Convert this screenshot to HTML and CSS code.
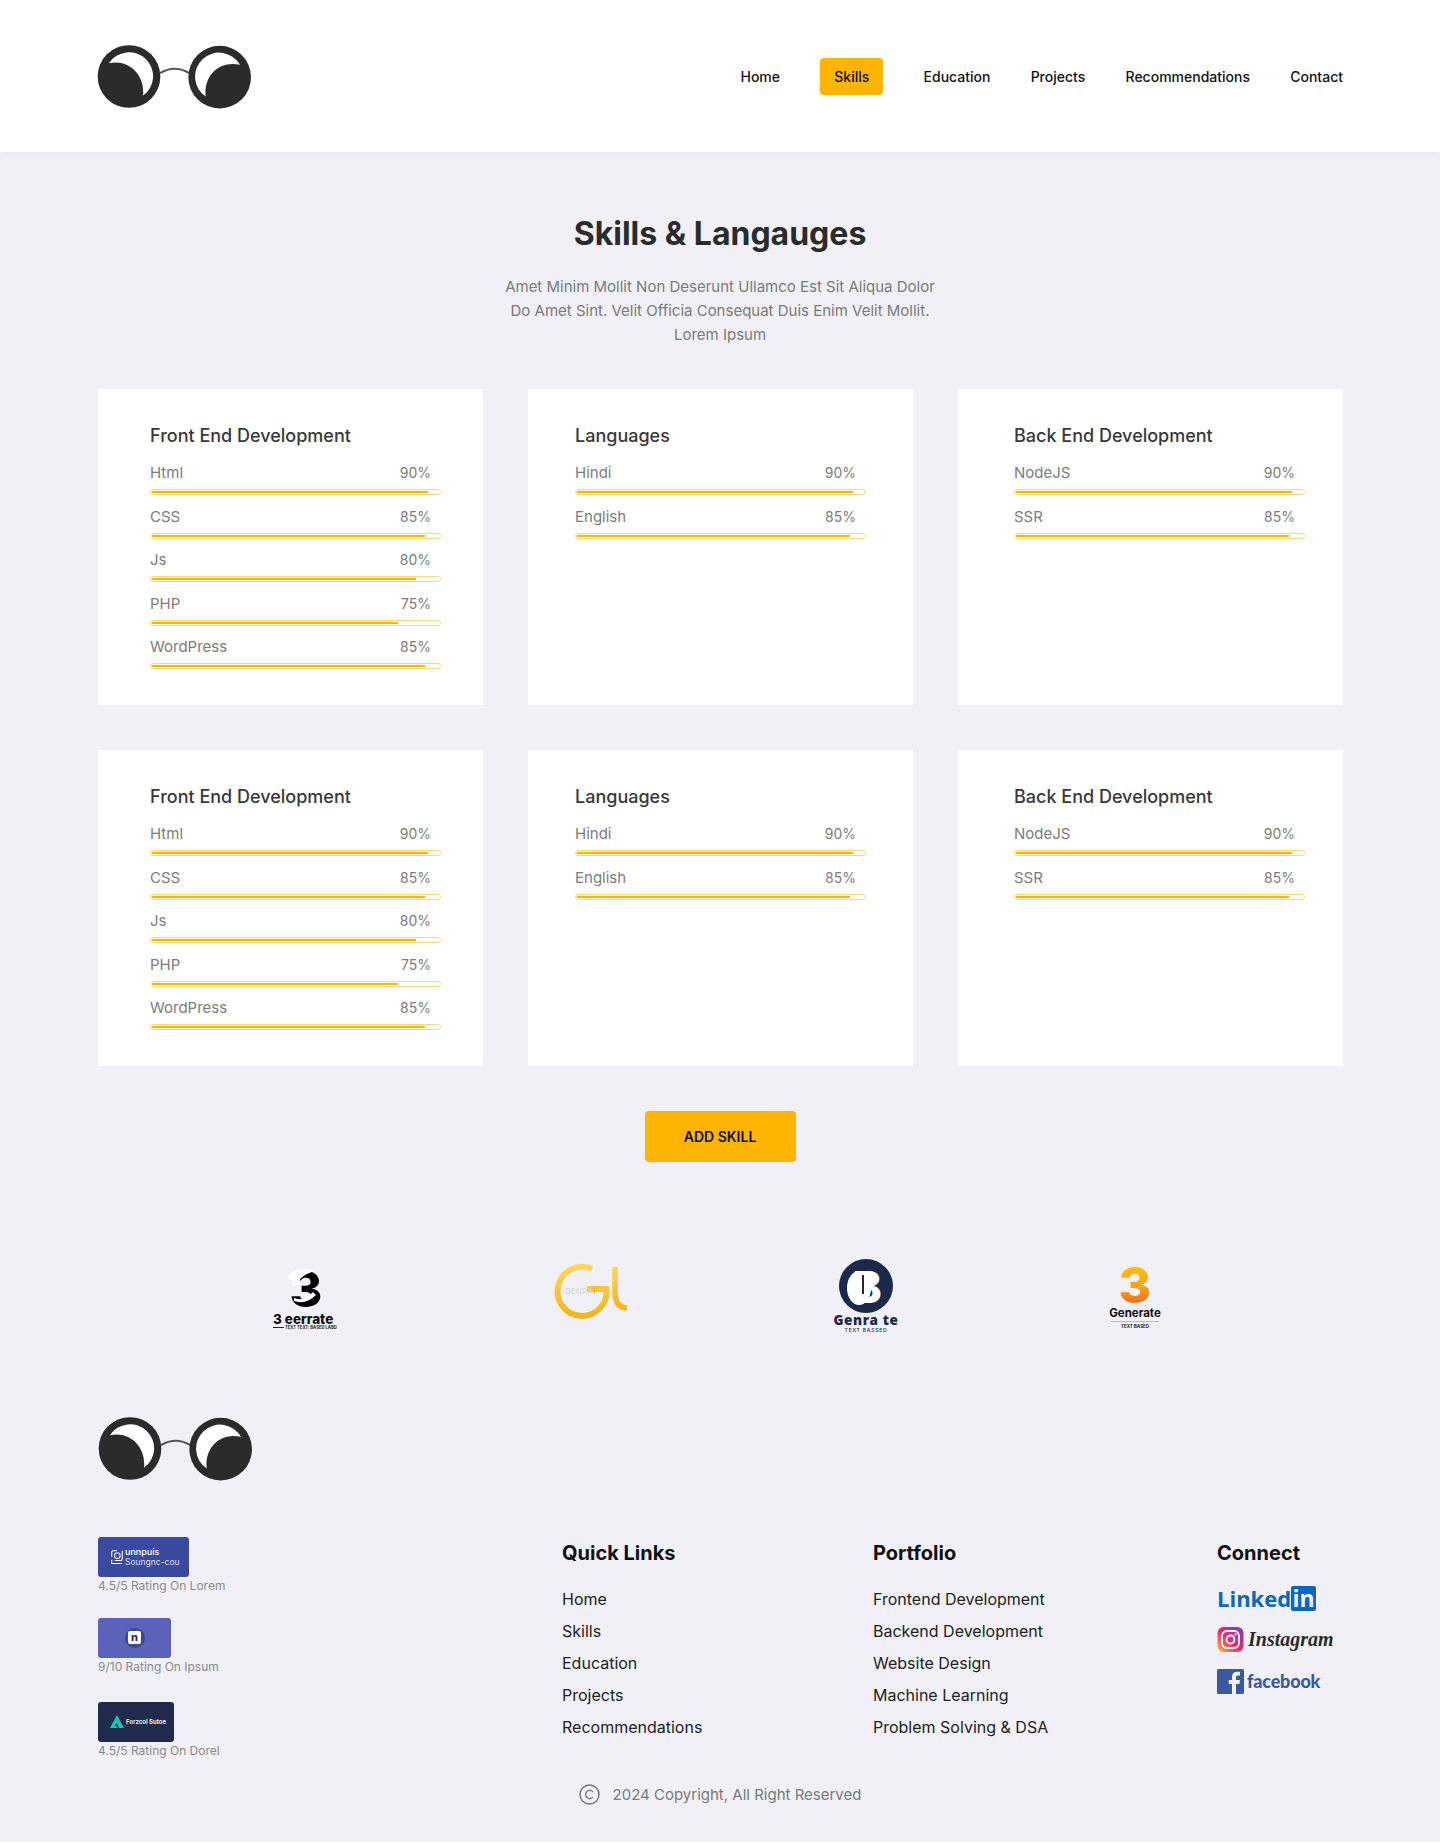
FILE: index.html
```html
<!DOCTYPE html>
<html lang="en">
<head>
<meta charset="utf-8">
<title>Skills &amp; Langauges</title>
<link rel="stylesheet" href="styles.css">
</head>
<body>
<svg class="defs" width="0" height="0" aria-hidden="true">
  <defs>
    <symbol id="glasses" viewBox="100 65 480 200">
      <path d="M298 155Q342 128 386 155" fill="none" stroke="#555" stroke-width="6"/>
      <circle cx="205" cy="165" r="94" fill="#2b2b2b"/>
      <circle cx="477" cy="167" r="94" fill="#2b2b2b"/>
      <path d="M145 125A72 72 0 1 1 247 223C254 160 205 112 145 125Z" fill="#fff"/>
      <path d="M538 130A72 72 0 1 0 435 225C428 160 478 116 538 130Z" fill="#fff"/>
    </symbol>
    <linearGradient id="gold" x1="0" y1="0" x2="0" y2="1">
      <stop offset="0" stop-color="#fdd65a"/><stop offset="1" stop-color="#f2b51c"/>
    </linearGradient>
    <linearGradient id="fire" x1="0" y1="0" x2="0" y2="1">
      <stop offset="0" stop-color="#ffd400"/><stop offset="0.55" stop-color="#f6a01a"/><stop offset="1" stop-color="#e44d20"/>
    </linearGradient>
    <linearGradient id="insta" x1="0" y1="1" x2="1" y2="0">
      <stop offset="0" stop-color="#fdc23e"/><stop offset="0.45" stop-color="#ee2a6b"/><stop offset="1" stop-color="#6a3fc8"/>
    </linearGradient>
  </defs>
</svg>

<header class="site-header">
  <svg class="logo" width="160" height="67"><use href="#glasses"/></svg>
  <nav class="nav">
    <a class="nav-link">Home</a>
    <a class="nav-link nav-link-active">Skills</a>
    <a class="nav-link">Education</a>
    <a class="nav-link">Projects</a>
    <a class="nav-link">Recommendations</a>
    <a class="nav-link">Contact</a>
  </nav>
</header>

<main class="main">
  <h1 class="title">Skills &amp; Langauges</h1>
  <p class="intro">Amet Minim Mollit Non Deserunt Ullamco Est Sit Aliqua Dolor Do Amet Sint. Velit Officia Consequat Duis Enim Velit Mollit. Lorem Ipsum</p>

  <section class="card-grid">
    <article class="card card-a">
      <h2 class="card-title">Front End Development</h2>
      <div class="skill"><div class="skill-row"><span>Html</span><span class="pct">90%</span></div><div class="bar"><div class="fill" style="width:96%"></div></div></div>
      <div class="skill"><div class="skill-row"><span>CSS</span><span class="pct">85%</span></div><div class="bar"><div class="fill" style="width:95%"></div></div></div>
      <div class="skill"><div class="skill-row"><span>Js</span><span class="pct">80%</span></div><div class="bar"><div class="fill" style="width:92%"></div></div></div>
      <div class="skill"><div class="skill-row"><span>PHP</span><span class="pct">75%</span></div><div class="bar"><div class="fill" style="width:85.6%"></div></div></div>
      <div class="skill"><div class="skill-row"><span>WordPress</span><span class="pct">85%</span></div><div class="bar"><div class="fill" style="width:95%"></div></div></div>
    </article>
    <article class="card card-b">
      <h2 class="card-title">Languages</h2>
      <div class="skill"><div class="skill-row"><span>Hindi</span><span class="pct">90%</span></div><div class="bar"><div class="fill" style="width:96%"></div></div></div>
      <div class="skill"><div class="skill-row"><span>English</span><span class="pct">85%</span></div><div class="bar"><div class="fill" style="width:95%"></div></div></div>
    </article>
    <article class="card card-c">
      <h2 class="card-title">Back End Development</h2>
      <div class="skill"><div class="skill-row"><span>NodeJS</span><span class="pct">90%</span></div><div class="bar"><div class="fill" style="width:96%"></div></div></div>
      <div class="skill"><div class="skill-row"><span>SSR</span><span class="pct">85%</span></div><div class="bar"><div class="fill" style="width:95%"></div></div></div>
    </article>
    <article class="card card-a">
      <h2 class="card-title">Front End Development</h2>
      <div class="skill"><div class="skill-row"><span>Html</span><span class="pct">90%</span></div><div class="bar"><div class="fill" style="width:96%"></div></div></div>
      <div class="skill"><div class="skill-row"><span>CSS</span><span class="pct">85%</span></div><div class="bar"><div class="fill" style="width:95%"></div></div></div>
      <div class="skill"><div class="skill-row"><span>Js</span><span class="pct">80%</span></div><div class="bar"><div class="fill" style="width:92%"></div></div></div>
      <div class="skill"><div class="skill-row"><span>PHP</span><span class="pct">75%</span></div><div class="bar"><div class="fill" style="width:85.6%"></div></div></div>
      <div class="skill"><div class="skill-row"><span>WordPress</span><span class="pct">85%</span></div><div class="bar"><div class="fill" style="width:95%"></div></div></div>
    </article>
    <article class="card card-b">
      <h2 class="card-title">Languages</h2>
      <div class="skill"><div class="skill-row"><span>Hindi</span><span class="pct">90%</span></div><div class="bar"><div class="fill" style="width:96%"></div></div></div>
      <div class="skill"><div class="skill-row"><span>English</span><span class="pct">85%</span></div><div class="bar"><div class="fill" style="width:95%"></div></div></div>
    </article>
    <article class="card card-c">
      <h2 class="card-title">Back End Development</h2>
      <div class="skill"><div class="skill-row"><span>NodeJS</span><span class="pct">90%</span></div><div class="bar"><div class="fill" style="width:96%"></div></div></div>
      <div class="skill"><div class="skill-row"><span>SSR</span><span class="pct">85%</span></div><div class="bar"><div class="fill" style="width:95%"></div></div></div>
    </article>
  </section>

  <div class="action"><button class="add-btn" type="button">ADD SKILL</button></div>

  <section class="brands">
    <svg class="brand" width="100" height="82" viewBox="0 -10 100 82">
      <text class="b1-mark" x="50" y="42" text-anchor="middle">3</text>
      <path d="M35 8Q46 1 60 6Q50 8 44 14Q44 18 50 19L36 21Q38 14 32 13Q33 10 35 8Z" fill="#fff"/>
      <path d="M38 33Q48 37 57 27L60 30Q50 40 38 36Z" fill="#fff"/>
      <text class="b1-name" x="17" y="59">3 eerrate</text>
      <rect x="17" y="62" width="11" height="1" fill="#222"/>
      <text class="b1-sub" x="29" y="64">TEXT TEXT: BASED LABD</text>
    </svg>
    <svg class="brand" width="88" height="82" viewBox="0 -10 88 82">
      <path d="M46 4A24.500 24.500 0 1 0 60.500 24H41" fill="none" stroke="url(#gold)" stroke-width="6"/>
      <path d="M69 2V26Q69 43 81 43" fill="none" stroke="url(#gold)" stroke-width="5.500"/>
      <text class="b2-text" x="19" y="29">GENRA<tspan class="b2-t">T</tspan></text>
    </svg>
    <svg class="brand" width="84" height="82" viewBox="0 -10 84 82">
      <circle cx="42" cy="21" r="27" fill="#1b294b"/>
      <ellipse cx="35" cy="23" rx="12" ry="17" fill="#fff"/>
      <ellipse cx="46" cy="14" rx="7" ry="7" fill="#fff"/>
      <text class="b3-mark" x="43" y="38" text-anchor="middle">B</text>
      <path d="M39 10V29" stroke="#1b294b" stroke-width="2" fill="none"/>
      <text class="b3-name" x="42" y="60" text-anchor="middle">Genra te</text>
      <text class="b3-sub" x="42" y="67" text-anchor="middle">TEXT BASSED</text>
    </svg>
    <svg class="brand" width="74" height="82" viewBox="0 -10 74 82">
      <text class="b4-mark" x="37" y="38" text-anchor="middle" fill="url(#fire)">3</text>
      <text class="b4-name" x="37" y="52" text-anchor="middle">Generate</text>
      <rect x="13" y="56" width="48" height="1" fill="#bbb"/>
      <text class="b4-sub" x="37" y="63" text-anchor="middle">TEXT BASED</text>
    </svg>
  </section>

  <footer class="footer">
    <svg class="logo footer-logo" width="160" height="67"><use href="#glasses"/></svg>
    <div class="footer-cols">
      <div class="ratings">
        <div class="rating">
          <div class="badge badge-one">
            <svg class="badge-icon" width="12" height="17" viewBox="0 0 16 20"><path d="M8 1H3a2 2 0 0 0-2 2v6M15 1v11a2 2 0 0 1-2 2H5M1 13v5h14" fill="none" stroke="#fff" stroke-width="1.400"/><rect x="5" y="4" width="7" height="7" rx="2" fill="none" stroke="#fff" stroke-width="1.400"/></svg>
            <div class="badge-words"><span class="badge-strong">unnpuis</span><span class="badge-light">Soungnc-cou</span></div>
          </div>
          <p class="rating-text">4.5/5 Rating On Lorem</p>
        </div>
        <div class="rating">
          <div class="badge badge-two"><span class="badge-dot"><span class="badge-n">n</span></span></div>
          <p class="rating-text">9/10 Rating On Ipsum</p>
        </div>
        <div class="rating">
          <div class="badge badge-three">
            <svg width="14" height="14" viewBox="0 0 14 14"><path d="M7 0L14 13H9L7 8L5 10L8 13H0Z" fill="#18c6b3"/></svg>
            <span class="badge-tiny">Forzcol Sutoe</span>
          </div>
          <p class="rating-text">4.5/5 Rating On Dorel</p>
        </div>
      </div>
      <div class="link-col col-quick">
        <h3 class="col-title">Quick Links</h3>
        <a class="col-link">Home</a><a class="col-link">Skills</a><a class="col-link">Education</a><a class="col-link">Projects</a><a class="col-link">Recommendations</a>
      </div>
      <div class="link-col col-portfolio">
        <h3 class="col-title">Portfolio</h3>
        <a class="col-link">Frontend Development</a><a class="col-link">Backend Development</a><a class="col-link">Website Design</a><a class="col-link">Machine Learning</a><a class="col-link">Problem Solving &amp; DSA</a>
      </div>
      <div class="link-col col-connect">
        <h3 class="col-title">Connect</h3>
        <div class="social social-li"><span class="li-word">Linked</span><span class="li-box">in</span></div>
        <div class="social social-ig">
          <svg width="27" height="25" viewBox="0 0 26 25"><rect width="26" height="25" rx="6" fill="url(#insta)"/><rect x="4.500" y="4" width="17" height="17" rx="5" fill="none" stroke="#fff" stroke-width="1.800"/><circle cx="13" cy="12.500" r="4" fill="none" stroke="#fff" stroke-width="1.800"/><circle cx="18" cy="7.500" r="1.100" fill="#fff"/></svg>
          <span class="ig-word">Instagram</span>
        </div>
        <div class="social social-fb">
          <svg width="27" height="25" viewBox="0 0 27 25"><rect width="27" height="25" rx="1.500" fill="#3b5a9d"/><path d="M19 25V15h3.400l.6-4h-4V8.500c0-1.200.5-2 2.100-2H23V3c-.6-.1-1.700-.2-3-.2-3 0-5 1.800-5 5V11h-3.300v4H15v10z" fill="#f0f0f6"/></svg>
          <span class="fb-word">facebook</span>
        </div>
      </div>
    </div>
    <div class="copyright">
      <svg width="21" height="21" viewBox="0 0 21 21"><circle cx="10.500" cy="10.500" r="9.500" fill="none" stroke="#777" stroke-width="1.500"/><path d="M14 7.800a4.200 4.200 0 1 0 0 5.400" fill="none" stroke="#777" stroke-width="1.300"/></svg>
      <span>2024 Copyright, All Right Reserved</span>
    </div>
  </footer>
</main>
</body>
</html>
```
FILE: styles.css
```css
* { box-sizing: border-box; }
html { background: #fff; }
body {
  margin: 0;
  font-family: Inter, "Liberation Sans", sans-serif;
  color: #2b2b2b;
  background: #fff;
}
.defs { position: absolute; }
.logo { display: block; }

.site-header {
  height: 152px;
  padding: 0 97px 0 94px;
  background: #fff;
  display: flex;
  align-items: center;
  justify-content: space-between;
  box-shadow: 0 2px 8px rgba(30, 30, 60, 0.04);
  position: relative;
}
.nav { display: flex; align-items: center; gap: 40.25px; }
.nav-link { font-size: 14px; font-weight: 450; line-height: 20px; color: #111; padding-top: 1px; }
.nav-link-active { background: #ffb400; border-radius: 4px; padding: 9px 14px 8px; }

.main {
  background: #f0f0f6;
  padding: 65px 98px 0;
  height: 1690px;
}
.title {
  margin: 0;
  text-align: center;
  font-size: 32px;
  font-weight: 700;
  line-height: 34px;
  color: #2b2b2b;
}
.intro {
  margin: 24px auto 0;
  width: 440px;
  text-align: center;
  font-size: 15px;
  line-height: 24px;
  color: #7a7a7a;
}
.card-grid {
  margin-top: 42px;
  display: grid;
  grid-template-columns: repeat(3, 385px);
  gap: 45px;
}
.card { background: #fff; height: 316px; padding-top: 35px; }
.card-a { padding-left: 52px; }
.card-b { padding-left: 47px; }
.card-c { padding-left: 56px; }
.card-title {
  margin: 0 0 15px;
  font-size: 18px;
  font-weight: 500;
  line-height: 24px;
  color: #383838;
}
.skill { width: 291px; height: 43.5px; }
.skill-row {
  display: flex;
  justify-content: space-between;
  align-items: baseline;
  padding-right: 10px;
  font-size: 15px;
  line-height: 20px;
  color: #7c7c7c;
}
.pct { font-size: 14px; }
.bar {
  margin-top: 6px;
  height: 6px;
  border: 1px solid #ffd775;
  border-radius: 3px;
  background: #fff;
  padding: 1px;
}
.fill { height: 2px; background: #ffb400; box-shadow: 0 0 1px #ffc640; }

.action { display: flex; justify-content: center; margin-top: 45px; }
.add-btn {
  width: 151px;
  height: 51px;
  border: 0;
  border-radius: 4px;
  background: #ffb400;
  font-family: inherit;
  font-size: 14px;
  font-weight: 600;
  color: #111;
}

.brands {
  display: flex;
  gap: 190px;
  margin-top: 93px;
  padding-left: 158px;
}
.brand { display: block; }
.b1-mark { font: 800 50px Inter, sans-serif; fill: #000; }
.b1-name { font: 800 13.500px Inter, sans-serif; fill: #111; }
.b1-sub { font: 700 4.200px Inter, sans-serif; fill: #222; }
.b2-text { font: 500 8px Inter, sans-serif; fill: #d9d9d9; }
.b2-t { fill: #f2b51c; }
.b3-mark { font: 800 44px Inter, sans-serif; fill: #fff; }
.b3-name { font: 800 13.500px "Open Sans", sans-serif; fill: #1b294b; letter-spacing: 0.6px; }
.b3-sub { font: 500 5px Inter, sans-serif; fill: #1b294b; letter-spacing: 0.8px; }
.b4-mark { font: 800 50px Inter, sans-serif; }
.b4-name { font: 700 11.500px Inter, sans-serif; fill: #111; }
.b4-sub { font: 700 4.500px Inter, sans-serif; fill: #222; }

.footer { margin-top: 78px; }
.footer-logo { margin-left: -3px; }
.footer-cols { display: flex; margin-top: 55px; }
.ratings { width: 464px; }
.rating { margin-bottom: 26px; }
.rating:first-child { margin-bottom: 22.5px; }
.rating:last-child { margin-bottom: 0; }
.badge {
  height: 40px;
  border-radius: 3px;
  display: flex;
  align-items: center;
}
.badge-one { width: 91px; background: #3a4a9f; padding-left: 13px; gap: 2px; color: #fff; }
.badge-words { display: flex; flex-direction: column; }
.badge-strong { font-size: 9px; font-weight: 500; line-height: 10px; }
.badge-light { font-size: 8.500px; line-height: 10px; color: #d7dcf2; }
.badge-two { width: 73px; background: #5a62b9; justify-content: center; }
.badge-dot {
  width: 20px; height: 20px; border-radius: 50%;
  background: #3f478f;
  display: flex; align-items: center; justify-content: center;
}
.badge-n {
  width: 13px; height: 13px; border-radius: 2px;
  background: #fff; color: #2b2f60;
  font-size: 11px; font-weight: 800; line-height: 12px; text-align: center;
}
.badge-three { width: 76px; background: #212c4d; padding-left: 12px; gap: 2px; }
.badge-tiny { font-size: 6px; font-weight: 700; color: #e8f0ee; white-space: nowrap; }
.rating-text { margin: 0; font-size: 12px; line-height: 18px; color: #8a8a8a; }

.link-col { display: flex; flex-direction: column; }
.col-quick { width: 311px; }
.col-portfolio { width: 344px; }
.col-title {
  margin: 0 0 14px;
  font-size: 20px;
  font-weight: 700;
  line-height: 32px;
  color: #111;
}
.col-link { font-size: 16px; line-height: 32px; color: #222; }
.social { display: flex; align-items: center; height: 25px; margin-bottom: 16px; }
.social-li { margin-top: 3px; }
.li-word { font: 700 22px/25px "Open Sans", sans-serif; color: #0a66c2; }
.li-box {
  width: 25px; height: 25px; border-radius: 2px;
  background: #0a66c2; color: #f0f0f6;
  font: 700 23px/25px "Open Sans", sans-serif; text-align: center;
}
.ig-word { margin-left: 4px; font: italic 700 20px/25px "Liberation Serif", serif; color: #2a2a2a; }
.social-fb { margin-top: 1px; }
.fb-word { margin-left: 3px; font: 900 18px/25px Lato, sans-serif; letter-spacing: -0.2px; color: #3b5a9d; }

.copyright {
  display: flex;
  align-items: center;
  justify-content: center;
  gap: 13px;
  margin-top: 23px;
  font-size: 15px;
  line-height: 24px;
  color: #7a7a7a;
}
```
